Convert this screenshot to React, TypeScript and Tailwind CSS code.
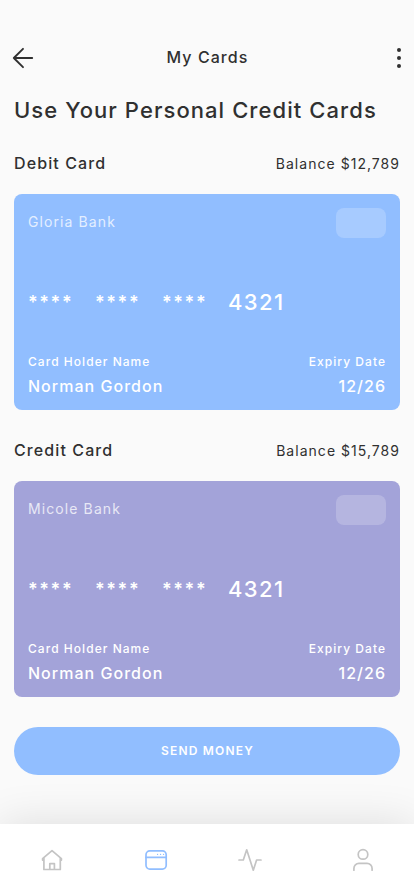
import { ReactNode } from 'react';

interface BankCard {
  id: string;
  title: string;
  balance: string;
  bank: string;
  lastDigits: string;
  holder: string;
  expiry: string;
  color: string;
}

const cards: BankCard[] = [
  {
    id: 'debit',
    title: 'Debit Card',
    balance: '$12,789',
    bank: 'Gloria Bank',
    lastDigits: '4321',
    holder: 'Norman Gordon',
    expiry: '12/26',
    color: 'bg-[#91beff]',
  },
  {
    id: 'credit',
    title: 'Credit Card',
    balance: '$15,789',
    bank: 'Micole Bank',
    lastDigits: '4321',
    holder: 'Norman Gordon',
    expiry: '12/26',
    color: 'bg-[#a3a3d9]',
  },
];

function Header() {
  return (
    <header className="flex h-6 items-center justify-between pl-[11px] pr-[13px]">
      <button type="button" aria-label="Back">
        <svg width="24" height="24" fill="none" stroke="currentColor" strokeWidth="1.9" strokeLinecap="round" strokeLinejoin="round">
          <path d="M21.2 12H2.8M12 2.8L2.8 12l9.2 9.2" />
        </svg>
      </button>
      <h1 className="-mt-0.5 ml-[3px] text-base leading-6 font-medium tracking-[1.05px]">My Cards</h1>
      <button type="button" aria-label="More" className="flex w-6 flex-col items-end gap-1">
        <span className="size-1 rounded-full bg-[#303030]" />
        <span className="size-1 rounded-full bg-[#303030]" />
        <span className="size-1 rounded-full bg-[#303030]" />
      </button>
    </header>
  );
}

function MaskedGroup() {
  return <span className="w-[67px] text-[18px] font-semibold tracking-[1.6px]">****</span>;
}

function CardSection({ card }: { card: BankCard }) {
  return (
    <section>
      <div className="flex h-6 items-center justify-between">
        <h3 className="text-base font-medium tracking-[1.1px]">{card.title}</h3>
        <p className="mt-0.5 text-sm tracking-[1.03px]">Balance {card.balance}</p>
      </div>
      <div className={`mt-[19px] flex h-[216px] flex-col rounded-lg p-3.5 text-white ${card.color}`}>
        <div className="flex h-[30px] items-center justify-between">
          <span className="-mt-0.5 text-sm tracking-[1.1px] opacity-75">{card.bank}</span>
          <span className="h-[30px] w-[50px] rounded-lg bg-white/20" />
        </div>
        <div className="mt-[48px] flex h-8 items-center">
          <MaskedGroup />
          <MaskedGroup />
          <MaskedGroup />
          <span className="-ml-px text-[22px] font-medium tracking-[1.4px]">{card.lastDigits}</span>
        </div>
        <div className="mt-auto flex justify-between">
          <div>
            <p className="text-xs leading-5 font-medium tracking-[1.04px]">Card Holder Name</p>
            <p className="mt-1 text-base leading-5 font-medium tracking-[1.02px]">{card.holder}</p>
          </div>
          <div className="text-right">
            <p className="text-xs leading-5 font-medium tracking-[1.04px]">Expiry Date</p>
            <p className="mt-1 text-base leading-5 font-medium tracking-[1.02px]">{card.expiry}</p>
          </div>
        </div>
      </div>
    </section>
  );
}

function TabButton({ label, active = false, children }: { label: string; active?: boolean; children: ReactNode }) {
  return (
    <button type="button" aria-label={label} className={active ? 'text-[#91beff]' : 'text-[#c4c4c4]'}>
      <svg width="24" height="24" fill="none" stroke="currentColor" strokeWidth="1.7" strokeLinecap="round" strokeLinejoin="round">
        {children}
      </svg>
    </button>
  );
}

function TabBar() {
  return (
    <nav className="mt-auto flex h-[72px] items-center bg-white pl-10 shadow-[0_0_45px_rgba(0,0,0,0.12)]">
      <TabButton label="Home">
        <path d="M2.6 12.1v-1.5L12 2.6l9.4 8v1.5M3.9 10v11.5h16.4V10M9.8 21.5v-5.9h4.6v5.9" />
      </TabButton>
      <div className="ml-20 flex">
        <TabButton label="Cards" active>
          <rect x="2" y="2.9" width="20.2" height="18.2" rx="3.8" />
          <path d="M2 9.4h20.2" />
          <path d="M13.5 6.4h.1M16.5 6.4h.1M19.5 6.4h.1" strokeWidth="1.2" />
        </TabButton>
      </div>
      <div className="ml-[70px] flex">
        <TabButton label="Activity">
          <path d="M1 12h4.3L8.7 1.8 15.3 22.2 18.6 12H23" />
        </TabButton>
      </div>
      <div className="ml-[89px] flex">
        <TabButton label="Profile">
          <circle cx="12" cy="6.4" r="4.8" />
          <path d="M2.9 22.2v-1.8a5 5 0 0 1 5-5h8.2a5 5 0 0 1 5 5v1.8" />
        </TabButton>
      </div>
    </nav>
  );
}

export default function App() {
  return (
    <div className="flex h-[896px] w-[414px] flex-col overflow-hidden bg-[#fafafa] pt-[46px] font-['Inter',sans-serif] text-[#303030]">
      <Header />
      <main className="px-3.5">
        <h2 className="mt-[24px] text-[22px] leading-8 font-medium tracking-[1.07px] whitespace-nowrap">
          Use Your Personal Credit Cards
        </h2>
        <div className="mt-[25px] flex flex-col gap-7">
          {cards.map(card => (
            <CardSection key={card.id} card={card} />
          ))}
        </div>
        <button
          type="button"
          className="mt-[30px] h-12 w-full rounded-full bg-[#91beff] pl-px text-xs font-semibold tracking-[1.2px] text-white"
        >
          SEND MONEY
        </button>
      </main>
      <TabBar />
    </div>
  );
}
